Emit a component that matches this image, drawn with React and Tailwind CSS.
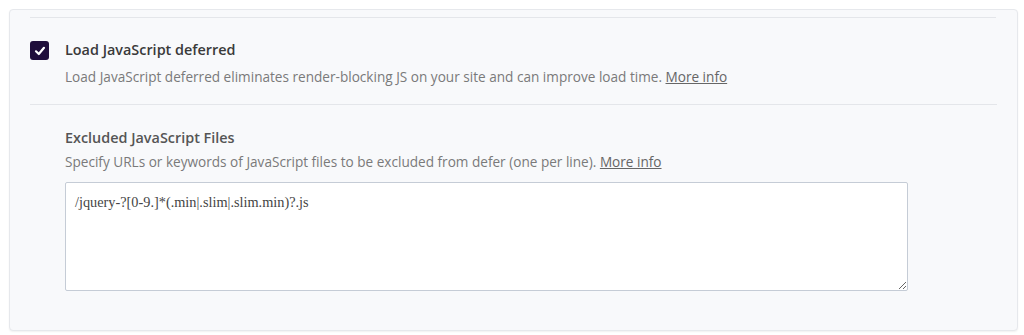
import React from "react";

export default function App() {
  return (
    <div className="w-[1024px] h-[335px] bg-white pt-[9px] pl-[9px] pr-[6px]">
      <div
        className="h-[322px] rounded border border-[#e6e8ec] bg-[#f8f9fb] px-[20px] pt-[7px] text-[#333] shadow-[0_1px_2px_rgba(0,0,0,0.06)]"
        style={{ fontFamily: '"Open Sans", "Noto Sans", sans-serif' }}
      >
        <div className="mr-[1px] border-t border-[#e4e6ea]" />

        <div className="flex pt-[22px] pb-[17px]">
          <div className="w-[35px] shrink-0 pt-[1px]">
            <span className="flex h-[19px] w-[19px] items-center justify-center rounded-[3px] bg-[#1f0e3b]">
              <svg width="12" height="12" viewBox="0 0 12 12" fill="none">
                <path d="M2 6.3 L4.8 9 L10 2.8" stroke="white" strokeWidth="2.2" strokeLinecap="round" strokeLinejoin="round" />
              </svg>
            </span>
          </div>
          <div>
            <div className="text-[14.4px] font-semibold leading-[20px] text-[#3a3a3a]">Load JavaScript deferred</div>
            <p className="mt-[7px] text-[13.6px] leading-[20px] text-[#7a7a7a]">
              Load JavaScript deferred eliminates render-blocking JS on your site and can improve load time.{" "}
              <a href="#" className="text-[#666] underline">More info</a>
            </p>
          </div>
        </div>

        <div className="border-t border-[#e4e6ea]" />

        <div className="pl-[35px] pt-[23px]">
          <div className="text-[14.4px] font-semibold leading-[20px] text-[#555]">Excluded JavaScript Files</div>
          <p className="mt-[4px] text-[13.6px] leading-[20px] text-[#7a7a7a]">
            Specify URLs or keywords of JavaScript files to be excluded from defer (one per line).{" "}
            <a href="#" className="text-[#666] underline">More info</a>
          </p>
          <textarea
            defaultValue="/jquery-?[0-9.]*(.min|.slim|.slim.min)?.js"
            className="mt-[10px] block h-[109px] w-[843px] rounded-[2px] border border-[#c5ccd6] bg-white px-[9px] py-[9px] text-[14.3px] leading-[20px] text-[#444] outline-none"
            style={{ fontFamily: '"Liberation Serif", "Times New Roman", serif' }}
          />
        </div>
      </div>
    </div>
  );
}
